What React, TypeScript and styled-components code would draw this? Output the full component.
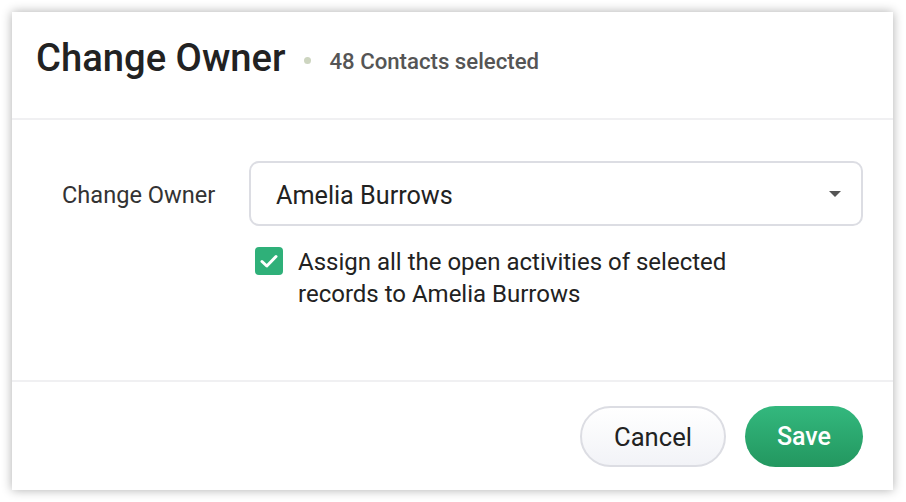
import React, {FC} from 'react';
import styled, {createGlobalStyle} from 'styled-components';

const GlobalStyle = createGlobalStyle`
  html, body {
    margin: 0;
    padding: 0;
    background: #ffffff;
    font-family: Roboto, "Liberation Sans", sans-serif;
  }
`

const Page = styled.div`
  width: 906px;
  height: 502px;
  padding: 12px 13px 12px 12px;
  box-sizing: border-box;
`

const Card = styled.div`
  width: 881px;
  height: 478px;
  background: #ffffff;
  box-shadow: 0 0 10px rgba(0, 0, 0, 0.32);
  display: flex;
  flex-direction: column;
`

const Header = styled.div`
  height: 108px;
  box-sizing: border-box;
  padding: 0 24px 14px 24px;
  display: flex;
  align-items: center;
  border-bottom: 2px solid #f0f0f2;
`

const Title = styled.h1`
  margin: 0;
  font-size: 38.2px;
  font-weight: 500;
  color: #222222;
`

const Dot = styled.span`
  width: 7px;
  height: 7px;
  border-radius: 50%;
  background: #cdd5c0;
  margin: 4px 18px 0 19px;
`

const Subtitle = styled.span`
  font-size: 22.2px;
  font-weight: 500;
  color: #555555;
  margin-top: 6px;
`

const Body = styled.div`
  flex: 1;
  padding: 41px 30px 0 50px;
  display: flex;
  flex-direction: column;
  gap: 20px;
`

const FieldRow = styled.div`
  display: flex;
  align-items: center;
`

const Label = styled.label`
  width: 187px;
  font-size: 23.6px;
  color: #333333;
  margin-top: 3px;
`

const Select = styled.div`
  flex: 1;
  height: 65px;
  box-sizing: border-box;
  border: 2px solid #dcdde3;
  border-radius: 10px;
  display: flex;
  align-items: center;
  justify-content: space-between;
  padding: 3px 20px 0 25px;
  font-size: 25.2px;
  color: #222222;
`

const Caret = styled.span`
  width: 0;
  height: 0;
  border-left: 6px solid transparent;
  border-right: 6px solid transparent;
  border-top: 6px solid #555555;
  margin-top: -3px;
`

const CheckRow = styled.div`
  display: flex;
  align-items: flex-start;
  margin-left: 193px;
  gap: 15px;
`

const Box = styled.span`
  width: 28px;
  height: 28px;
  flex-shrink: 0;
  border-radius: 4px;
  background: #2fb079;
  display: flex;
  align-items: center;
  justify-content: center;
  margin-top: 1px;
`

const CheckText = styled.span`
  font-size: 24px;
  line-height: 32px;
  color: #222222;
  width: 450px;
`

const Footer = styled.div`
  height: 110px;
  box-sizing: border-box;
  border-top: 2px solid #f0f0f2;
  display: flex;
  align-items: center;
  justify-content: flex-end;
  gap: 19px;
  padding: 0 30px 0 0;
`

const Button = styled.button<{primary?: boolean}>`
  height: 61px;
  padding: 0 32px;
  border-radius: 31px;
  font-family: Roboto, "Liberation Sans", sans-serif;
  font-size: ${p => p.primary ? '25px' : '25.6px'};
  font-weight: ${p => p.primary ? 500 : 400};
  cursor: pointer;
  color: ${p => p.primary ? '#ffffff' : '#222222'};
  border: ${p => p.primary ? 'none' : '2px solid #dcdde3'};
  background: ${p => p.primary
    ? 'linear-gradient(to bottom, #33b87e, #23975f)'
    : 'linear-gradient(to bottom, #ffffff, #f2f3f7)'};
  margin-top: 1px;
`

const Check: FC = () =>
  <svg width="18" height="14" viewBox="0 0 18 14" fill="none">
    <path d="M2 7.5 L6.8 12 L16 2.5" stroke="#ffffff" strokeWidth="3" strokeLinecap="round" strokeLinejoin="round"/>
  </svg>

const App: FC = () =>
  <>
    <GlobalStyle/>
    <Page>
      <Card>
        <Header>
          <Title>Change Owner</Title>
          <Dot/>
          <Subtitle>48 Contacts selected</Subtitle>
        </Header>
        <Body>
          <FieldRow>
            <Label>Change Owner</Label>
            <Select>
              Amelia Burrows
              <Caret/>
            </Select>
          </FieldRow>
          <CheckRow>
            <Box><Check/></Box>
            <CheckText>Assign all the open activities of selected records to Amelia Burrows</CheckText>
          </CheckRow>
        </Body>
        <Footer>
          <Button>Cancel</Button>
          <Button primary>Save</Button>
        </Footer>
      </Card>
    </Page>
  </>

export default App
